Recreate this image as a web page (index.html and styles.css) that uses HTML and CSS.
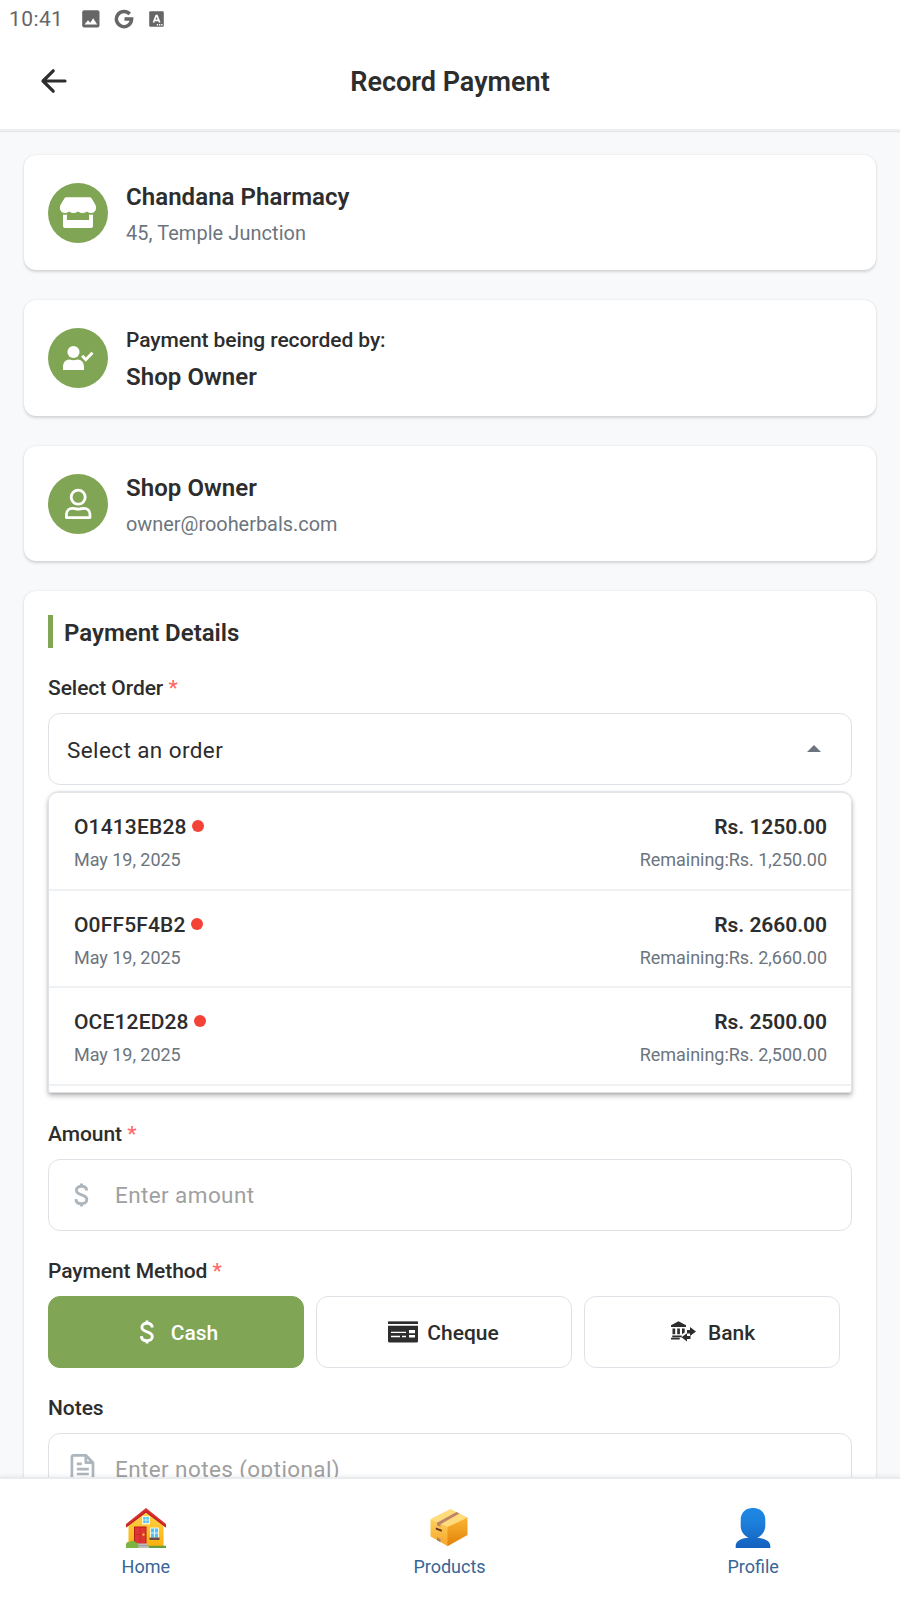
FILE: index.html
```html
<!DOCTYPE html>
<html lang="en">
<head>
<meta charset="utf-8">
<title>Record Payment</title>
<link rel="stylesheet" href="styles.css">
</head>
<body>
<div class="status">
  <span class="clock">10:41</span>
  <svg class="st-img" width="18" height="18" viewBox="0 0 18 18"><rect x=".2" y=".2" width="17.3" height="17.3" rx="2" fill="#666"/><path d="M2.500 14.500l3.500-4.300 2.200 2.600 3-4.500 4 6.200z" fill="#fff"/></svg>
  <svg class="st-g" width="20" height="20" viewBox="0 0 20 20"><path d="M15.700 5A7.600 7.600 0 1 0 17.600 10.100H10.500" fill="none" stroke="#666" stroke-width="3.500"/></svg>
  <svg class="st-a" width="16" height="16" viewBox="0 0 16 16"><rect x=".2" y=".2" width="14.600" height="15.500" rx="1.200" fill="#666"/><path d="M4.500 11.500L7.200 4.500h.8l2.700 7M5.600 9.300h4" fill="none" stroke="#fff" stroke-width="1.700"/><path d="M7.800 13.800h6" stroke="#fff" stroke-width="1.500" stroke-dasharray="1.300 .9"/></svg>
</div>
<header class="header">
  <svg class="back" width="28" height="26" viewBox="0 0 28 26" fill="none" stroke="#2d2d2d" stroke-width="3.200" stroke-linecap="round" stroke-linejoin="round"><path d="M13.200 2.800L3 13l10.200 10.200M3.200 13H25"/></svg>
  <h1 class="title">Record Payment</h1>
</header>
<main class="content">
  <section class="card info">
    <div class="avatar"><svg width="60" height="60" viewBox="0 0 60 60" fill="#fff"><path d="M18.300 14.300H41.700Q43 14.300 43.700 15.400L47.400 21.800C49.300 25.600 47.300 29.900 43.400 30.100C41.500 30.200 39.800 29.200 38.900 28.500Q34.500 31.700 30 28.500Q25.500 31.700 21.100 28.500C20.200 29.200 18.500 30.200 16.600 30.100C12.700 29.900 10.700 25.600 12.600 21.800L16.300 15.400Q17 14.300 18.300 14.300z"/><path d="M15 31.500q2 .4 3.900 0V37h22.200v-5.500q2 .4 3.900 0V43q0 2-2 2H17q-2 0-2-2z"/></svg></div>
    <div class="who"><div class="name">Chandana Pharmacy</div><div class="sub address">45, Temple Junction</div></div>
  </section>
  <section class="card info">
    <div class="avatar"><svg width="60" height="60" viewBox="0 0 60 60" fill="#fff"><circle cx="25.500" cy="24" r="6.100"/><path d="M15 42v-3.200C15 34.500 17.700 31.500 21.500 31.500Q25.500 33 29.500 31.500C33.300 31.500 36 34.500 36 38.800V42H15z"/><path d="M34.200 27.700l3.600 4 6.700-7" fill="none" stroke="#fff" stroke-width="2.900"/></svg></div>
    <div class="who"><div class="by">Payment being recorded by:</div><div class="name tight">Shop Owner</div></div>
  </section>
  <section class="card info user">
    <div class="avatar"><svg width="60" height="60" viewBox="0 0 60 60" fill="none" stroke="#fff" stroke-width="2.800" stroke-linejoin="round"><circle cx="30.200" cy="23.200" r="7"/><path d="M18.400 43.600v-3.100c0-3.900 2.700-6.200 6.100-6.200 2.200 0 2.900.9 5.700.9s3.500-.9 5.700-.9c3.400 0 6.100 2.300 6.100 6.200v3.100z"/></svg></div>
    <div class="who"><div class="name">Shop Owner</div><div class="sub">owner@rooherbals.com</div></div>
  </section>
  <section class="card form">
    <h2 class="heading">Payment Details</h2>
    <div class="label">Select Order <b class="req">*</b></div>
    <div class="box select"><span>Select an order</span><i class="caret"></i></div>
    <div class="menu">
      <div class="item">
        <div class="row"><span class="oid">O1413EB28<i class="dot"></i></span><span class="amt">Rs. 1250.00</span></div>
        <div class="row small"><span>May 19, 2025</span><span>Remaining:Rs. 1,250.00</span></div>
      </div>
      <div class="item">
        <div class="row"><span class="oid">O0FF5F4B2<i class="dot"></i></span><span class="amt">Rs. 2660.00</span></div>
        <div class="row small"><span>May 19, 2025</span><span>Remaining:Rs. 2,660.00</span></div>
      </div>
      <div class="item">
        <div class="row"><span class="oid">OCE12ED28<i class="dot"></i></span><span class="amt">Rs. 2500.00</span></div>
        <div class="row small"><span>May 19, 2025</span><span>Remaining:Rs. 2,500.00</span></div>
      </div>
    </div>
    <div class="label">Amount <b class="req">*</b></div>
    <div class="box field">
      <svg class="lead" width="28" height="28" viewBox=".5 0 28 28" fill="none" stroke="#adb5bd" stroke-width="2.900"><path id="dollar" d="M19.200 9.500C19 6.700 16.900 5.300 14 5.300c-3 0-5.100 1.600-5.100 4 0 2.700 2.300 3.700 5.100 4.500 3.200.9 5.300 1.900 5.300 4.700 0 2.600-2.200 4.200-5.300 4.200-3.300 0-5.500-1.700-5.600-4.600M14 2.400v4M14 21.500v4"/></svg>
      <span>Enter amount</span>
    </div>
    <div class="label lower">Payment Method <b class="req">*</b></div>
    <div class="methods">
      <div class="method active"><svg width="28" height="28" viewBox="1 0 28 28" fill="none" stroke="#fff" stroke-width="2.900"><use href="#dollar"/></svg>Cash</div>
      <div class="method"><svg width="30" height="30" viewBox="0 0 30 30" fill="#2d2d2d"><path d="M0 5.300V4.800q0-.8.8-.8h28.400q.8 0 .8.800v.5z" opacity=".65"/><path d="M0 5h30v2H0z"/><path fill-rule="evenodd" d="M0 8.700h30V24q0 1.500-1.500 1.500h-27Q0 25.500 0 24zM3 14.700v1.400h15v-1.400zM3 18.700v1.600h9v-1.600zM14 18.700v1.600h4v-1.600zM21 13v3.200h6V13zM21 18v2.500h6V18z"/></svg>Cheque</div>
      <div class="method bank"><svg width="30" height="30" viewBox="0 0 30 30" fill="#2d2d2d"><path d="M2 8.200L9.500 4.300 17 8.200V10H2zM3.500 11.500h2.700v5.700H3.500zM8.200 11.500h2.700v5.700H8.200zM13 11.500h2.700v4L13 17.200zM3.200 18.500h9.500v1.700H3.200zM2 20.700h8.700v1.800H2zM18 13h3v-3l6 4.500-6 4.500v-2.500h-3zM21.500 18.900H18v-2.600L12.500 20.300l5.500 4.200V22h3.500z"/></svg>Bank</div>
    </div>
    <div class="label lower">Notes</div>
    <div class="box field notes">
      <svg class="lead" width="28" height="34" viewBox="-.5 0 28 34" fill="none" stroke="#adb5bd" stroke-width="2.700" stroke-linejoin="round"><path d="M5.300 3.300h12l7.200 7.400v19H5.300q-1.900 0-1.900-1.900V5.200q0-1.900 1.900-1.900zM17.300 3.300v7.400h7.200M8.300 11.800h5M8.300 17.200h12M8.300 22h12"/></svg>
      <span>Enter notes (optional)</span>
    </div>
  </section>
</main>
<nav class="nav">
  <div class="tabs">
  <div class="tab">
    <svg width="42" height="42" viewBox="0 0 42 42">
      <defs><linearGradient id="wall" x1="0" y1="0" x2="0" y2="1"><stop offset="0" stop-color="#fdd44f"/><stop offset="1" stop-color="#fdb10d"/></linearGradient></defs>
      <path d="M3.500 17L21 3l17.500 14v22h-35z" fill="url(#wall)"/>
      <path d="M21 1L1 17v3.500L21 5.500l20 15V17z" fill="#d9302f"/>
      <path d="M1 19v1.500L21 5.500l20 15V19L21 4z" fill="#b92023"/>
      <path d="M17 9h8v8.500h-8z" fill="#fff3d0"/><path d="M18.200 10h5.600v6h-5.600z" fill="#4fc3f7"/><path d="M21 10v6M18 13h6" stroke="#fff" stroke-width=".6"/>
      <path d="M9 19.500h12.500V37H9z" fill="#b71c1c"/><path d="M10 20.500h10.500V37H10z" fill="#e03535"/><path d="M15.200 20.500V37M10 27.500h10" stroke="#c52828" stroke-width=".8"/><circle cx="18.500" cy="27.600" r="1.200" fill="#ffca28"/>
      <path d="M25 20.500h9v11h-9z" fill="#fff3d0"/><path d="M26 21.500h7v9h-7z" fill="#4fc3f7"/><path d="M29.500 21.500v9M26 26h7" stroke="#fff" stroke-width=".8"/><path d="M24.500 30.500H34.500V33h-10z" fill="#6d4c41"/>
      <path d="M1 38.700h40V41H1z" fill="#689f38"/><path d="M12 36.500h10l2.500 4.500H11z" fill="#bdbdbd"/><path d="M12 38.600h11" stroke="#8a8a8a" stroke-width=".6"/>
      <path d="M1 41v-3c0-3 2.500-3.500 4-3 1.500-2 5-1.500 5.500.5 2.500 0 3 2.500 3 5.500z" fill="#7cb342"/>
    </svg><span>Home</span></div>
  <div class="tab">
    <svg width="42" height="42" viewBox="0 0 42 42">
      <defs><linearGradient id="boxl" x1="0" y1="0" x2="0" y2="1"><stop offset="0" stop-color="#fdcf5b"/><stop offset="1" stop-color="#f8a52b"/></linearGradient><linearGradient id="boxr" x1="0" y1="0" x2="0" y2="1"><stop offset="0" stop-color="#fdb634"/><stop offset="1" stop-color="#e08208"/></linearGradient></defs>
      <path d="M2.500 12L20 19.500v19.700L2.500 29.500z" fill="url(#boxl)"/>
      <path d="M19.500 19.500l20-9.500v18l-20 11.200z" fill="url(#boxr)"/>
      <path d="M2.500 12L22.500 2l17 8.500L19.500 20z" fill="#fedc7c"/>
      <path d="M9 15.800L28.500 5l3 1.500L12.500 17.200V20L9 18.200z" fill="#bd8568"/>
      <path d="M9 30.200l3.500 2v3L9 33.200z" fill="#a88069"/>
      <path d="M7.800 20.500l6 2.200v2l-6-2.200z" fill="#5b3520"/>
    </svg><span>Products</span></div>
  <div class="tab">
    <svg width="42" height="42" viewBox="0 0 42 42">
      <defs><linearGradient id="bust" gradientUnits="userSpaceOnUse" x1="0" y1="1" x2="0" y2="41"><stop offset="0" stop-color="#1e88e5"/><stop offset=".35" stop-color="#1c80dc"/><stop offset="1" stop-color="#1560be"/></linearGradient></defs>
      <path d="M21 1c7.500 0 12.300 4.500 12.300 12v6c0 5.500-3.800 10-8 11.800 8 .6 13 3.400 13 8.200v2H3.700v-2c0-4.800 5-7.600 13-8.200-4.200-1.800-8-6.300-8-11.800v-6C8.700 5.500 13.500 1 21 1z" fill="url(#bust)"/>
    </svg><span>Profile</span></div>
  </div>
</nav>
</body>
</html>
```
FILE: styles.css
```css
* { box-sizing: border-box; }
body {
  margin: 0;
  height: 1600px;
  overflow: hidden;
  display: flex;
  flex-direction: column;
  background: #f8f9fb;
  color: #2d2d2d;
  font-family: Roboto, "Liberation Sans", sans-serif;
}
svg { display: block; flex: none; }
.status {
  height: 37px;
  flex: none;
  display: flex;
  align-items: center;
  padding-left: 9px;
  background: #fff;
}
.clock { width: 72.500px; font-size: 21px; line-height: 35px; padding-top: 2px; letter-spacing: .4px; color: #666; }
.st-g { margin-left: 14px; }
.st-a { margin-left: 15px; }
.header {
  height: 94px;
  flex: none;
  display: grid;
  grid-template-columns: 60px 1fr 60px;
  align-items: center;
  padding: 0 40px 5px;
  background: #fff;
  border-bottom: 2px solid #eeeff1;
  box-shadow: 0 1px 1px rgba(0,0,0,.07);
}
.title { grid-column: 2; margin: 0; padding-top: 3px; text-align: center; font-size: 27px; line-height: 36px; font-weight: 600; }
.content { flex: 1; min-height: 0; overflow: hidden; padding: 24px 24px 0; }
.card {
  background: #fff;
  border-radius: 12px;
  box-shadow: 0 1.500px 3px rgba(0,0,0,.15), 0 0 1.500px rgba(0,0,0,.08);
}
.info { height: 115.300px; margin-bottom: 30px; padding: 0 24px; display: flex; align-items: center; gap: 18px; }
.user { padding-top: 1px; }
.avatar { width: 60px; height: 60px; border-radius: 50%; background: #80a555; }
.name { font-size: 24px; line-height: 36px; font-weight: 600; letter-spacing: .06px; }
.sub { margin-top: 5px; font-size: 19.900px; line-height: 27px; color: #6c757d; }
.address { letter-spacing: .1px; }
.by { font-size: 21px; line-height: 32px; font-weight: 500; letter-spacing: -.08px; }
.tight { margin-top: 6px; line-height: 30px; }
.form { height: 1000px; padding: 24px 24px 0; }
.heading {
  margin: 0 0 25px;
  height: 33px;
  padding-left: 11px;
  border-left: 5px solid #80a555;
  font-size: 24px;
  line-height: 36.500px;
  font-weight: 600;
}
.label { font-size: 21px; line-height: 30px; margin-bottom: 10.300px; font-weight: 500; letter-spacing: -.06px; }
.lower { padding-top: 1px; margin-bottom: 9.300px; }
.req { font-weight: 500; color: #ff6b6b; }
.box {
  height: 72px;
  display: flex;
  align-items: center;
  border: 1.500px solid #dee2e6;
  border-radius: 12px;
  font-size: 22.500px;
  line-height: 36px;
  letter-spacing: .4px;
}
.select { justify-content: space-between; padding: 1px 30px 0 18px; }
.caret { border: 7.500px solid transparent; border-top: 0; border-bottom: 7.500px solid #6c757d; margin-bottom: 3px; }
.menu {
  height: 302px;
  margin: 6px 0 25.500px;
  border: 1px solid #dee2e6;
  border-top-color: #e3e6e9;
  border-top-width: 2px;
  border-radius: 10px 10px 3px 3px;
  overflow: hidden;
  box-shadow: 0 3px 5px rgba(0,0,0,.26), 0 1px 2px rgba(0,0,0,.1);
}
.item { height: 97px; padding: 19px 24px 0 25px; border-bottom: 2px solid #f0f1f3; }
.item:first-child { height: 98px; }
.item:last-child { height: 98px; }
.row { display: flex; justify-content: space-between; align-items: center; font-size: 21px; line-height: 30px; }
.oid { display: flex; align-items: center; gap: 5.700px; font-weight: 500; letter-spacing: .15px; }
.dot { width: 12px; height: 12px; border-radius: 50%; background: #f44336; margin-bottom: 2px; }
.amt { font-weight: 600; letter-spacing: -.05px; }
.small { margin-top: 4px; font-size: 18px; line-height: 28px; letter-spacing: -.03px; color: #6c757d; }
.field { margin-bottom: 24.500px; padding-left: 18.500px; color: #a0a0a0; }
.lead { margin-right: 19.500px; }
.methods { display: flex; gap: 12px; margin-bottom: 24.500px; }
.method {
  width: 256px;
  height: 72px;
  display: flex;
  align-items: center;
  justify-content: center;
  gap: 9px;
  padding: 2px 1px 0 0;
  border: 1.500px solid #dee2e6;
  border-radius: 12px;
  font-size: 21px;
  font-weight: 500;
}
.method svg { margin-top: -1px; }
.bank { padding-right: 0; }
.active { padding-right: 0; background: #80a555; border-color: #80a555; color: #fff; }
.nav {
  height: 123px;
  flex: none;
  position: relative;
  background: #fff;
  border-top: 2px solid #e9ecef;
  box-shadow: 0 -1px 4px rgba(0,0,0,.07);
}
.tabs { display: grid; grid-template-columns: repeat(3, 1fr); margin: 0 -5px 0 -6px; padding-top: 28px; }
.tab { display: flex; flex-direction: column; align-items: center; font-size: 18px; line-height: 24px; color: #376596; }
.tab span { margin-top: 6px; }
```
